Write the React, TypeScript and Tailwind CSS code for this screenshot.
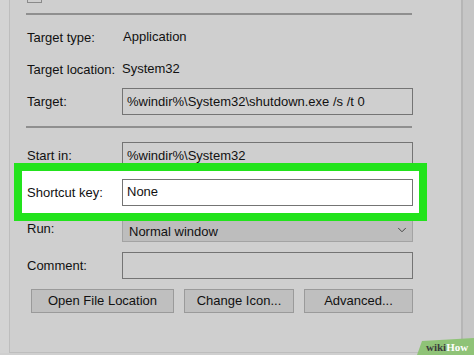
import { ChevronDown } from 'lucide-react';

const labelClass = 'w-[95px] shrink-0 text-[13px] leading-none';
const boxClass = 'w-[291px] h-[27px] border border-[#747474] flex items-center px-[4px] text-[13px]';
const buttonClass = 'h-[24px] bg-[#bfbfbf] border border-[#9a9a9a] text-[13px] flex items-center justify-center';

function Row({ label, children, className = '' }: { label: string; children: React.ReactNode; className?: string }) {
  return (
    <div className={`flex items-center ${className}`}>
      <span className={labelClass}>{label}</span>
      {children}
    </div>
  );
}

export default function App() {
  return (
    <div
      className="relative w-[474px] h-[355px] overflow-hidden flex bg-[#cfcfcf] text-[#111]"
      style={{ fontFamily: '"Liberation Sans", Arial, sans-serif' }}
    >
      <div className="w-[10px] h-[353px] bg-[#d3d3d3] border-r border-[#bdbdbd]" />

      <div className="flex-1 h-[353px] border-b border-[#bdbdbd] flex flex-col pl-[17px]">
        <div className="w-[15px] h-[3px] border-x border-b border-[#8a8a8a]" />
        <div className="mt-[10px] -ml-px w-[386px] h-[2px] bg-[#8f8f8f]" />

        <Row label="Target type:" className="mt-[11px] h-[22px]">
          <span className="text-[13px] pl-px">Application</span>
        </Row>
        <Row label="Target location:" className="mt-[10px] h-[22px]">
          <span className="text-[13px]">System32</span>
        </Row>
        <Row label="Target:" className="mt-[8px]">
          <div className={boxClass}>%windir%\System32\shutdown.exe /s /t 0</div>
        </Row>

        <div className="mt-[11px] -ml-px w-[386px] h-[2px] bg-[#8f8f8f]" />

        <Row label="Start in:" className="mt-[14px]">
          <div className={boxClass}>%windir%\System32</div>
        </Row>

        {/* highlighted row */}
        <div className="relative z-10 -mt-[6px] -ml-[13px] w-[413px] h-[58px] border-[8px] border-[#22e31c] bg-white flex items-center pl-[5px]">
          <span className={labelClass}>Shortcut key:</span>
          <div className={`${boxClass} bg-white border-[#7a7a7a]`}>None</div>
        </div>

        <Row label="Run:" className="-mt-[6px]">
          <div className={`${boxClass} bg-[#bdbdbd] border-[#a3a3a3] justify-between pl-[6px] pr-[3px]`}>
            <span className="pt-[6px]">Normal window</span>
            <ChevronDown size={14} strokeWidth={1.5} className="text-[#333] mt-[3px]" />
          </div>
        </Row>

        <Row label="Comment:" className="mt-[10px]">
          <div className={boxClass} />
        </Row>

        <div className="mt-[10px] ml-[4px] flex gap-[10px]">
          <button className={`${buttonClass} w-[143px]`}>Open File Location</button>
          <button className={`${buttonClass} w-[110px]`}>Change Icon...</button>
          <button className={`${buttonClass} w-[109px]`}>Advanced...</button>
        </div>
      </div>

      <div className="w-[13px] h-full bg-[#c6c6c6] border-l-2 border-[#b6b6b6]" />

      {/* wikiHow badge */}
      <div className="absolute right-0 bottom-0 w-[57px] h-[17px]">
        <svg width="57" height="17" className="absolute inset-0">
          <polygon points="5,3 57,0 57,17 0,17" fill="#8fc377" />
        </svg>
        <div
          className="relative pl-[9px] pt-[4px] text-[11px] font-bold leading-none whitespace-nowrap"
          style={{ fontFamily: '"Liberation Serif", "DejaVu Serif", serif' }}
        >
          <span className="text-[#3c3c3c]">wiki</span>
          <span className="text-white">How</span>
        </div>
      </div>
    </div>
  );
}
